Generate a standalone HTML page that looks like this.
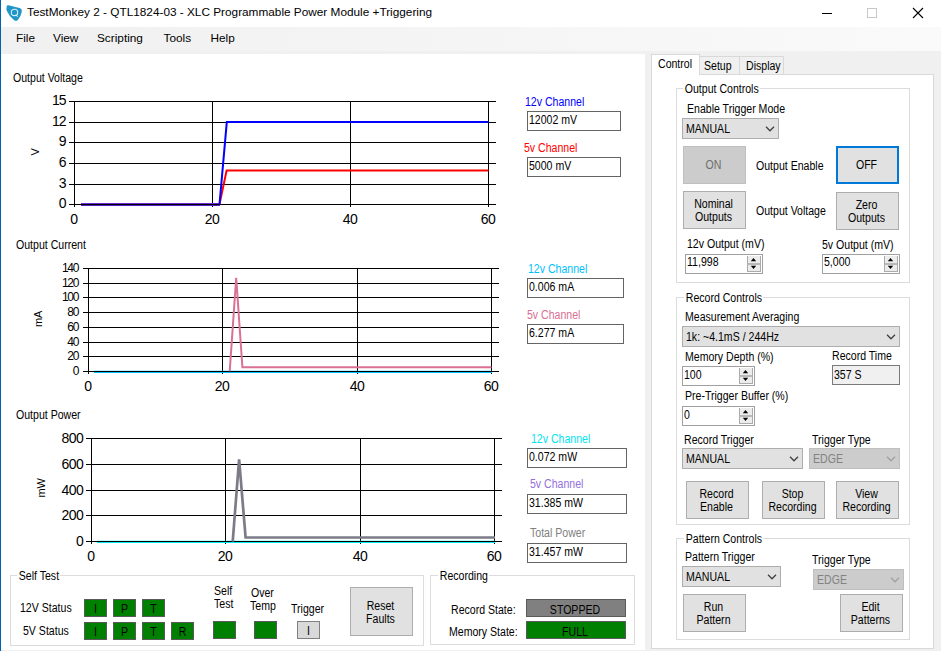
<!DOCTYPE html>
<html><head><meta charset="utf-8"><style>
html,body{margin:0;padding:0;width:941px;height:651px;overflow:hidden;background:#f0f0f0;}
body{position:relative;font-family:"Liberation Sans",sans-serif;}
.t{position:absolute;line-height:1;white-space:nowrap;}
.b{position:absolute;}
svg.ch{position:absolute;left:0;top:0;}
</style></head><body>

<div class="b" style="left:0px;top:0px;width:941px;height:27px;background:#fff;"></div>
<div class="b" style="left:0px;top:0px;width:1px;height:651px;background:#0063b1;"></div>
<svg class="b" style="left:0px;top:0px" width="26" height="26"><path d="M6.8 6.2 Q6.5 5 8.5 5.2 L19.5 8 Q22.2 8.8 21.8 11.8 Q21 16.5 17.8 20 Q16.3 21.6 14.2 20.2 Q9.2 16.5 6.6 10.5 Q6.1 8 6.8 6.2 Z" fill="#1f95c8"/><circle cx="14.5" cy="12.4" r="3.2" fill="none" stroke="#d8eef7" stroke-width="1.1"/><path d="M15.6 14.6 L17.8 16.6" stroke="#d8eef7" stroke-width="1.1"/></svg>
<div class="t" style="left:27px;top:6.51px;font-size:11.8px;letter-spacing:0px;color:#000;">TestMonkey 2 - QTL1824-03 - XLC Programmable Power Module +Triggering</div>
<div class="b" style="left:822px;top:13px;width:10px;height:1px;background:#000;"></div>
<div class="b" style="left:867px;top:8px;width:10px;height:10px;background:none;box-sizing:border-box;border:1px solid #c8c8c8;"></div>
<svg class="b" style="left:912px;top:7px" width="12" height="12"><path d="M1 1 L11 11 M11 1 L1 11" stroke="#000" stroke-width="1.1"/></svg>
<div class="b" style="left:1px;top:27px;width:940px;height:24px;background:linear-gradient(to right,#f0f0f0,#fafafa);"></div>
<div class="t" style="left:16px;top:33.01px;font-size:11.8px;letter-spacing:0px;color:#000;">File</div>
<div class="t" style="left:53px;top:33.01px;font-size:11.8px;letter-spacing:0px;color:#000;">View</div>
<div class="t" style="left:97px;top:33.01px;font-size:11.8px;letter-spacing:0px;color:#000;">Scripting</div>
<div class="t" style="left:163.5px;top:33.01px;font-size:11.8px;letter-spacing:0px;color:#000;">Tools</div>
<div class="t" style="left:210.5px;top:33.01px;font-size:11.8px;letter-spacing:0px;color:#000;">Help</div>
<div class="b" style="left:1px;top:54px;width:644px;height:596px;background:#fff;"></div>
<svg class="ch" width="941" height="651" shape-rendering="crispEdges"><rect x="69" y="101" width="427" height="1" fill="#000"/><rect x="69" y="122" width="427" height="1" fill="#000"/><rect x="69" y="142" width="427" height="1" fill="#000"/><rect x="69" y="163" width="427" height="1" fill="#000"/><rect x="69" y="184" width="427" height="1" fill="#000"/><rect x="69" y="204" width="427" height="1" fill="#000"/><rect x="74" y="101" width="1" height="106" fill="#000"/><rect x="212" y="101" width="1" height="106" fill="#000"/><rect x="350" y="101" width="1" height="106" fill="#000"/><rect x="488" y="101" width="1" height="106" fill="#000"/><rect x="83" y="268" width="416" height="1" fill="#000"/><rect x="83" y="283" width="416" height="1" fill="#000"/><rect x="83" y="297" width="416" height="1" fill="#000"/><rect x="83" y="312" width="416" height="1" fill="#000"/><rect x="83" y="327" width="416" height="1" fill="#000"/><rect x="83" y="342" width="416" height="1" fill="#000"/><rect x="83" y="356" width="416" height="1" fill="#000"/><rect x="83" y="371" width="416" height="1" fill="#000"/><rect x="88" y="268" width="1" height="106" fill="#000"/><rect x="222" y="268" width="1" height="106" fill="#000"/><rect x="357" y="268" width="1" height="106" fill="#000"/><rect x="491" y="268" width="1" height="106" fill="#000"/><rect x="86" y="438" width="416" height="1" fill="#000"/><rect x="86" y="464" width="416" height="1" fill="#000"/><rect x="86" y="490" width="416" height="1" fill="#000"/><rect x="86" y="515" width="416" height="1" fill="#000"/><rect x="86" y="541" width="416" height="1" fill="#000"/><rect x="91" y="438" width="1" height="106" fill="#000"/><rect x="225" y="438" width="1" height="106" fill="#000"/><rect x="360" y="438" width="1" height="106" fill="#000"/><rect x="494" y="438" width="1" height="106" fill="#000"/><rect x="81" y="203" width="139" height="1" fill="#6a2bd0"/><rect x="81" y="205" width="139" height="1" fill="#5020c0"/><rect x="94" y="372" width="398" height="1" fill="#00bfff"/><rect x="94" y="370" width="398" height="1" fill="#00bfff" opacity="0.25"/><rect x="97" y="542" width="398" height="1" fill="#00e8f0"/><rect x="97" y="540" width="398" height="1" fill="#00e8f0" opacity="0.25"/></svg>
<svg class="ch" width="941" height="651"><polyline points="219.5,204.4 226.6,170.6 488.5,170.6" fill="none" stroke="#ff0000" stroke-width="2" stroke-linejoin="miter" opacity="1"/><polyline points="219.5,204.4 226.8,122.1 488.5,122.1" fill="none" stroke="#0000ff" stroke-width="2" stroke-linejoin="miter" opacity="1"/><polyline points="229.7,371.3 236.2,277.7 242.4,367.2 491.5,367.2" fill="none" stroke="#db7093" stroke-width="2" stroke-linejoin="miter" opacity="1"/><polyline points="232.7,541.6 239.1,459.4 245.6,537.5 495,537.5" fill="none" stroke="#7c7c88" stroke-width="2.7" stroke-linejoin="miter" opacity="1"/></svg>
<div class="t" style="left:12.5px;top:72.34px;font-size:12px;letter-spacing:0px;color:#000;transform:scaleX(0.88);transform-origin:0 0;">Output Voltage</div>
<div class="t" style="left:5.5px;top:93.16px;font-size:14px;letter-spacing:-1.0px;color:#000;width:60px;text-align:right;">15</div>
<div class="t" style="left:5.5px;top:114.16px;font-size:14px;letter-spacing:-1.0px;color:#000;width:60px;text-align:right;">12</div>
<div class="t" style="left:5.5px;top:134.16px;font-size:14px;letter-spacing:-1.0px;color:#000;width:60px;text-align:right;">9</div>
<div class="t" style="left:5.5px;top:155.16px;font-size:14px;letter-spacing:-1.0px;color:#000;width:60px;text-align:right;">6</div>
<div class="t" style="left:5.5px;top:176.16px;font-size:14px;letter-spacing:-1.0px;color:#000;width:60px;text-align:right;">3</div>
<div class="t" style="left:5.5px;top:196.16px;font-size:14px;letter-spacing:-1.0px;color:#000;width:60px;text-align:right;">0</div>
<div class="t" style="left:44.0px;top:211.65px;font-size:14px;letter-spacing:-0.5px;color:#000;width:60px;text-align:center;">0</div>
<div class="t" style="left:182.0px;top:211.65px;font-size:14px;letter-spacing:-0.5px;color:#000;width:60px;text-align:center;">20</div>
<div class="t" style="left:320.0px;top:211.65px;font-size:14px;letter-spacing:-0.5px;color:#000;width:60px;text-align:center;">40</div>
<div class="t" style="left:458.0px;top:211.65px;font-size:14px;letter-spacing:-0.5px;color:#000;width:60px;text-align:center;">60</div>
<div class="t" style="left:4.799999999999997px;top:146.3px;width:60px;height:12px;line-height:12px;text-align:center;font-size:11px;letter-spacing:-0.3px;transform:rotate(-90deg)">V</div>
<div class="t" style="left:15.5px;top:238.64px;font-size:12px;letter-spacing:0px;color:#000;transform:scaleX(0.88);transform-origin:0 0;">Output Current</div>
<div class="t" style="left:18.299999999999997px;top:261.64px;font-size:12px;letter-spacing:-1.2px;color:#000;width:60px;text-align:right;">140</div>
<div class="t" style="left:18.299999999999997px;top:276.64px;font-size:12px;letter-spacing:-1.2px;color:#000;width:60px;text-align:right;">120</div>
<div class="t" style="left:18.299999999999997px;top:290.64px;font-size:12px;letter-spacing:-1.2px;color:#000;width:60px;text-align:right;">100</div>
<div class="t" style="left:18.299999999999997px;top:305.64px;font-size:12px;letter-spacing:-1.2px;color:#000;width:60px;text-align:right;">80</div>
<div class="t" style="left:18.299999999999997px;top:320.64px;font-size:12px;letter-spacing:-1.2px;color:#000;width:60px;text-align:right;">60</div>
<div class="t" style="left:18.299999999999997px;top:335.64px;font-size:12px;letter-spacing:-1.2px;color:#000;width:60px;text-align:right;">40</div>
<div class="t" style="left:18.299999999999997px;top:349.64px;font-size:12px;letter-spacing:-1.2px;color:#000;width:60px;text-align:right;">20</div>
<div class="t" style="left:18.299999999999997px;top:364.64px;font-size:12px;letter-spacing:-1.2px;color:#000;width:60px;text-align:right;">0</div>
<div class="t" style="left:58.0px;top:378.65px;font-size:14px;letter-spacing:-0.5px;color:#000;width:60px;text-align:center;">0</div>
<div class="t" style="left:192.0px;top:378.65px;font-size:14px;letter-spacing:-0.5px;color:#000;width:60px;text-align:center;">20</div>
<div class="t" style="left:327.0px;top:378.65px;font-size:14px;letter-spacing:-0.5px;color:#000;width:60px;text-align:center;">40</div>
<div class="t" style="left:461.0px;top:378.65px;font-size:14px;letter-spacing:-0.5px;color:#000;width:60px;text-align:center;">60</div>
<div class="t" style="left:7.799999999999997px;top:312.9px;width:60px;height:12px;line-height:12px;text-align:center;font-size:11px;letter-spacing:-0.3px;transform:rotate(-90deg)">mA</div>
<div class="t" style="left:15.5px;top:408.64px;font-size:12px;letter-spacing:0px;color:#000;transform:scaleX(0.88);transform-origin:0 0;">Output Power</div>
<div class="t" style="left:23.299999999999997px;top:431.16px;font-size:14px;letter-spacing:-0.5px;color:#000;width:60px;text-align:right;">800</div>
<div class="t" style="left:23.299999999999997px;top:457.16px;font-size:14px;letter-spacing:-0.5px;color:#000;width:60px;text-align:right;">600</div>
<div class="t" style="left:23.299999999999997px;top:483.16px;font-size:14px;letter-spacing:-0.5px;color:#000;width:60px;text-align:right;">400</div>
<div class="t" style="left:23.299999999999997px;top:508.16px;font-size:14px;letter-spacing:-0.5px;color:#000;width:60px;text-align:right;">200</div>
<div class="t" style="left:23.299999999999997px;top:534.16px;font-size:14px;letter-spacing:-0.5px;color:#000;width:60px;text-align:right;">0</div>
<div class="t" style="left:61.0px;top:548.65px;font-size:14px;letter-spacing:-0.5px;color:#000;width:60px;text-align:center;">0</div>
<div class="t" style="left:195.0px;top:548.65px;font-size:14px;letter-spacing:-0.5px;color:#000;width:60px;text-align:center;">20</div>
<div class="t" style="left:330.0px;top:548.65px;font-size:14px;letter-spacing:-0.5px;color:#000;width:60px;text-align:center;">40</div>
<div class="t" style="left:464.0px;top:548.65px;font-size:14px;letter-spacing:-0.5px;color:#000;width:60px;text-align:center;">60</div>
<div class="t" style="left:10.700000000000003px;top:482.2px;width:60px;height:12px;line-height:12px;text-align:center;font-size:11px;letter-spacing:-0.3px;transform:rotate(-90deg)">mW</div>
<div class="t" style="left:525px;top:95.74px;font-size:12px;letter-spacing:0px;color:#0000ff;transform:scaleX(0.88);transform-origin:0 0;">12v Channel</div>
<div class="b" style="left:527px;top:111px;width:94px;height:20px;background:#fff;box-sizing:border-box;border:1px solid #646464;"></div>
<div class="t" style="left:529px;top:113.74px;font-size:12px;letter-spacing:0px;color:#000;transform:scaleX(0.88);transform-origin:0 0;">12002 mV</div>
<div class="t" style="left:524px;top:141.84px;font-size:12px;letter-spacing:0px;color:#ff0000;transform:scaleX(0.88);transform-origin:0 0;">5v Channel</div>
<div class="b" style="left:527px;top:157px;width:94px;height:20px;background:#fff;box-sizing:border-box;border:1px solid #646464;"></div>
<div class="t" style="left:529px;top:159.74px;font-size:12px;letter-spacing:0px;color:#000;transform:scaleX(0.88);transform-origin:0 0;">5000 mV</div>
<div class="t" style="left:528px;top:262.74px;font-size:12px;letter-spacing:0px;color:#00bfff;transform:scaleX(0.88);transform-origin:0 0;">12v Channel</div>
<div class="b" style="left:527px;top:278px;width:97px;height:20px;background:#fff;box-sizing:border-box;border:1px solid #646464;"></div>
<div class="t" style="left:529px;top:280.74px;font-size:12px;letter-spacing:0px;color:#000;transform:scaleX(0.88);transform-origin:0 0;">0.006 mA</div>
<div class="t" style="left:527px;top:308.84px;font-size:12px;letter-spacing:0px;color:#db7093;transform:scaleX(0.88);transform-origin:0 0;">5v Channel</div>
<div class="b" style="left:527px;top:324px;width:97px;height:20px;background:#fff;box-sizing:border-box;border:1px solid #646464;"></div>
<div class="t" style="left:529px;top:326.74px;font-size:12px;letter-spacing:0px;color:#000;transform:scaleX(0.88);transform-origin:0 0;">6.277 mA</div>
<div class="t" style="left:530.8px;top:432.84px;font-size:12px;letter-spacing:0px;color:#00e5ee;transform:scaleX(0.88);transform-origin:0 0;">12v Channel</div>
<div class="b" style="left:527px;top:448px;width:100px;height:20px;background:#fff;box-sizing:border-box;border:1px solid #646464;"></div>
<div class="t" style="left:529px;top:450.74px;font-size:12px;letter-spacing:0px;color:#000;transform:scaleX(0.88);transform-origin:0 0;">0.072 mW</div>
<div class="t" style="left:530px;top:478.44px;font-size:12px;letter-spacing:0px;color:#9370db;transform:scaleX(0.88);transform-origin:0 0;">5v Channel</div>
<div class="b" style="left:527px;top:494px;width:100px;height:20px;background:#fff;box-sizing:border-box;border:1px solid #646464;"></div>
<div class="t" style="left:529px;top:496.74px;font-size:12px;letter-spacing:0px;color:#000;transform:scaleX(0.88);transform-origin:0 0;">31.385 mW</div>
<div class="t" style="left:530px;top:527.34px;font-size:12px;letter-spacing:0px;color:#808080;transform:scaleX(0.88);transform-origin:0 0;">Total Power</div>
<div class="b" style="left:527px;top:543px;width:100px;height:20px;background:#fff;box-sizing:border-box;border:1px solid #646464;"></div>
<div class="t" style="left:529px;top:545.74px;font-size:12px;letter-spacing:0px;color:#000;transform:scaleX(0.88);transform-origin:0 0;">31.457 mW</div>
<div class="b" style="left:10px;top:575px;width:414px;height:71px;background:none;box-sizing:border-box;border:1px solid #dcdcdc;"></div>
<div class="t" style="left:17.4px;top:569.94px;font-size:12px;letter-spacing:0px;color:#000;transform:scaleX(0.88);transform-origin:0 0;background:#fff;padding:0 1px 0 2px;">Self Test</div>
<div class="t" style="left:19.9px;top:601.84px;font-size:12px;letter-spacing:0px;color:#000;transform:scaleX(0.88);transform-origin:0 0;">12V Status</div>
<div class="t" style="left:23.3px;top:624.64px;font-size:12px;letter-spacing:0px;color:#000;transform:scaleX(0.88);transform-origin:0 0;">5V Status</div>
<div class="b" style="left:84px;top:599px;width:23px;height:18px;background:#008000;box-sizing:border-box;border:1px solid #5a5a5a;"></div>
<div class="t" style="left:84px;top:603.04px;font-size:12px;letter-spacing:0px;color:#000;width:23px;text-align:center;transform:scaleX(0.88);transform-origin:50% 0;">I</div>
<div class="b" style="left:113px;top:599px;width:23px;height:18px;background:#008000;box-sizing:border-box;border:1px solid #5a5a5a;"></div>
<div class="t" style="left:113px;top:603.04px;font-size:12px;letter-spacing:0px;color:#000;width:23px;text-align:center;transform:scaleX(0.88);transform-origin:50% 0;">P</div>
<div class="b" style="left:142px;top:599px;width:23px;height:18px;background:#008000;box-sizing:border-box;border:1px solid #5a5a5a;"></div>
<div class="t" style="left:142px;top:603.04px;font-size:12px;letter-spacing:0px;color:#000;width:23px;text-align:center;transform:scaleX(0.88);transform-origin:50% 0;">T</div>
<div class="b" style="left:84px;top:622px;width:23px;height:18px;background:#008000;box-sizing:border-box;border:1px solid #5a5a5a;"></div>
<div class="t" style="left:84px;top:626.04px;font-size:12px;letter-spacing:0px;color:#000;width:23px;text-align:center;transform:scaleX(0.88);transform-origin:50% 0;">I</div>
<div class="b" style="left:113px;top:622px;width:23px;height:18px;background:#008000;box-sizing:border-box;border:1px solid #5a5a5a;"></div>
<div class="t" style="left:113px;top:626.04px;font-size:12px;letter-spacing:0px;color:#000;width:23px;text-align:center;transform:scaleX(0.88);transform-origin:50% 0;">P</div>
<div class="b" style="left:142px;top:622px;width:23px;height:18px;background:#008000;box-sizing:border-box;border:1px solid #5a5a5a;"></div>
<div class="t" style="left:142px;top:626.04px;font-size:12px;letter-spacing:0px;color:#000;width:23px;text-align:center;transform:scaleX(0.88);transform-origin:50% 0;">T</div>
<div class="b" style="left:171px;top:622px;width:23px;height:18px;background:#008000;box-sizing:border-box;border:1px solid #5a5a5a;"></div>
<div class="t" style="left:171px;top:626.04px;font-size:12px;letter-spacing:0px;color:#000;width:23px;text-align:center;transform:scaleX(0.88);transform-origin:50% 0;">R</div>
<div class="t" style="left:214.2px;top:584.84px;font-size:12px;letter-spacing:0px;color:#000;transform:scaleX(0.88);transform-origin:0 0;">Self</div>
<div class="t" style="left:213.5px;top:597.84px;font-size:12px;letter-spacing:0px;color:#000;transform:scaleX(0.88);transform-origin:0 0;">Test</div>
<div class="t" style="left:250.8px;top:586.94px;font-size:12px;letter-spacing:0px;color:#000;transform:scaleX(0.88);transform-origin:0 0;">Over</div>
<div class="t" style="left:250.3px;top:599.94px;font-size:12px;letter-spacing:0px;color:#000;transform:scaleX(0.88);transform-origin:0 0;">Temp</div>
<div class="t" style="left:291px;top:603.44px;font-size:12px;letter-spacing:0px;color:#000;transform:scaleX(0.88);transform-origin:0 0;">Trigger</div>
<div class="b" style="left:213px;top:621px;width:23px;height:18px;background:#008000;box-sizing:border-box;border:1px solid #5a5a5a;"></div>
<div class="b" style="left:254px;top:621px;width:23px;height:18px;background:#008000;box-sizing:border-box;border:1px solid #5a5a5a;"></div>
<div class="b" style="left:297px;top:621px;width:23px;height:18px;background:#d9d9d9;box-sizing:border-box;border:1px solid #808080;"></div>
<div class="t" style="left:297px;top:625.04px;font-size:12px;letter-spacing:0px;color:#000;width:23px;text-align:center;transform:scaleX(0.88);transform-origin:50% 0;">I</div>
<div class="b" style="left:350px;top:587px;width:63px;height:49px;background:#e1e1e1;box-sizing:border-box;border:1px solid #adadad;"></div>
<div class="t" style="left:349px;top:599.64px;font-size:12px;letter-spacing:0px;color:#000;width:63px;text-align:center;transform:scaleX(0.88);transform-origin:50% 0;">Reset</div>
<div class="t" style="left:349px;top:612.64px;font-size:12px;letter-spacing:0px;color:#000;width:63px;text-align:center;transform:scaleX(0.88);transform-origin:50% 0;">Faults</div>
<div class="b" style="left:430px;top:575px;width:205px;height:70px;background:none;box-sizing:border-box;border:1px solid #dcdcdc;"></div>
<div class="t" style="left:437.6px;top:569.84px;font-size:12px;letter-spacing:0px;color:#000;transform:scaleX(0.88);transform-origin:0 0;background:#fff;padding:0 1px 0 2px;">Recording</div>
<div class="t" style="left:451.3px;top:604.04px;font-size:12px;letter-spacing:0px;color:#000;transform:scaleX(0.88);transform-origin:0 0;">Record State:</div>
<div class="t" style="left:449.3px;top:625.64px;font-size:12px;letter-spacing:0px;color:#000;transform:scaleX(0.88);transform-origin:0 0;">Memory State:</div>
<div class="b" style="left:526px;top:599px;width:100px;height:18px;background:#808080;box-sizing:border-box;border:1px solid #5a5a5a;"></div>
<div class="t" style="left:525px;top:604.04px;font-size:12px;letter-spacing:0px;color:#000;width:100px;text-align:center;transform:scaleX(0.88);transform-origin:50% 0;">STOPPED</div>
<div class="b" style="left:526px;top:621px;width:100px;height:18px;background:#008000;box-sizing:border-box;border:1px solid #5a5a5a;"></div>
<div class="t" style="left:525px;top:626.04px;font-size:12px;letter-spacing:0px;color:#000;width:100px;text-align:center;transform:scaleX(0.88);transform-origin:50% 0;">FULL</div>
<div class="b" style="left:699px;top:56px;width:41px;height:19px;background:#f0f0f0;box-sizing:border-box;border:1px solid #d9d9d9;"></div>
<div class="b" style="left:739px;top:56px;width:45px;height:19px;background:#f0f0f0;box-sizing:border-box;border:1px solid #d9d9d9;"></div>
<div class="t" style="left:704px;top:60.14px;font-size:12px;letter-spacing:0px;color:#000;transform:scaleX(0.88);transform-origin:0 0;">Setup</div>
<div class="t" style="left:746.2px;top:60.14px;font-size:12px;letter-spacing:0px;color:#000;transform:scaleX(0.88);transform-origin:0 0;">Display</div>
<div class="b" style="left:651px;top:74px;width:283px;height:575px;background:#fff;box-sizing:border-box;border:1px solid #d9d9d9;"></div>
<div class="b" style="left:651px;top:54px;width:49px;height:21px;background:#fff;box-sizing:border-box;border:1px solid #d9d9d9;border-bottom:none"></div>
<div class="t" style="left:658px;top:57.84px;font-size:12px;letter-spacing:0px;color:#000;transform:scaleX(0.88);transform-origin:0 0;">Control</div>
<div class="b" style="left:676px;top:88px;width:234px;height:195px;background:none;box-sizing:border-box;border:1px solid #dcdcdc;"></div>
<div class="t" style="left:683px;top:82.84px;font-size:12px;letter-spacing:0px;color:#000;transform:scaleX(0.88);transform-origin:0 0;background:#fff;padding:0 1px 0 2px;">Output Controls</div>
<div class="t" style="left:686.7px;top:103.24px;font-size:12px;letter-spacing:0px;color:#000;transform:scaleX(0.88);transform-origin:0 0;">Enable Trigger Mode</div>
<div class="b" style="left:682px;top:118px;width:97px;height:21px;background:#e1e1e1;box-sizing:border-box;border:1px solid #adadad;"></div>
<div class="t" style="left:686px;top:122.84px;font-size:12px;letter-spacing:0px;color:#000;transform:scaleX(0.88);transform-origin:0 0;">MANUAL</div>
<svg class="b" style="left:765px;top:125.0px" width="10" height="8"><path d="M1 1.8 L5 5.8 L9 1.8" fill="none" stroke="#404040" stroke-width="1.25"/></svg>
<div class="b" style="left:683px;top:146px;width:63px;height:38px;background:#cccccc;box-sizing:border-box;border:1px solid #bfbfbf;"></div>
<div class="t" style="left:682px;top:159.34px;font-size:12px;letter-spacing:0px;color:#6d6d6d;width:63px;text-align:center;transform:scaleX(0.88);transform-origin:50% 0;">ON</div>
<div class="t" style="left:755.6px;top:159.84px;font-size:12px;letter-spacing:0px;color:#000;transform:scaleX(0.88);transform-origin:0 0;">Output Enable</div>
<div class="b" style="left:836px;top:146px;width:63px;height:38px;background:#e1e1e1;box-sizing:border-box;border:2px solid #0078d7;"></div>
<div class="t" style="left:835px;top:159.34px;font-size:12px;letter-spacing:0px;color:#000;width:63px;text-align:center;transform:scaleX(0.88);transform-origin:50% 0;">OFF</div>
<div class="b" style="left:683px;top:191px;width:63px;height:38px;background:#e1e1e1;box-sizing:border-box;border:1px solid #adadad;"></div>
<div class="t" style="left:682px;top:198.34px;font-size:12px;letter-spacing:0px;color:#000;width:63px;text-align:center;transform:scaleX(0.88);transform-origin:50% 0;">Nominal</div>
<div class="t" style="left:682px;top:211.34px;font-size:12px;letter-spacing:0px;color:#000;width:63px;text-align:center;transform:scaleX(0.88);transform-origin:50% 0;">Outputs</div>
<div class="t" style="left:755.6px;top:204.84px;font-size:12px;letter-spacing:0px;color:#000;transform:scaleX(0.88);transform-origin:0 0;">Output Voltage</div>
<div class="b" style="left:836px;top:192px;width:63px;height:38px;background:#e1e1e1;box-sizing:border-box;border:1px solid #adadad;"></div>
<div class="t" style="left:835px;top:199.34px;font-size:12px;letter-spacing:0px;color:#000;width:63px;text-align:center;transform:scaleX(0.88);transform-origin:50% 0;">Zero</div>
<div class="t" style="left:835px;top:212.34px;font-size:12px;letter-spacing:0px;color:#000;width:63px;text-align:center;transform:scaleX(0.88);transform-origin:50% 0;">Outputs</div>
<div class="t" style="left:687.2px;top:238.44px;font-size:12px;letter-spacing:0px;color:#000;transform:scaleX(0.88);transform-origin:0 0;">12v Output (mV)</div>
<div class="b" style="left:685px;top:254px;width:78px;height:20px;background:#fff;box-sizing:border-box;border:1px solid #a0a0a0;"></div>
<div class="t" style="left:687.2px;top:256.34px;font-size:12px;letter-spacing:0px;color:#000;transform:scaleX(0.88);transform-origin:0 0;">11,998</div>
<svg class="b" style="left:747px;top:254px" width="15" height="20" shape-rendering="crispEdges"><rect x="0" y="2" width="14" height="16" fill="#ececec"/><rect x="0" y="2" width="1" height="16" fill="#ababab"/><rect x="13" y="2" width="1" height="16" fill="#ababab"/><rect x="0" y="17" width="14" height="1" fill="#ababab"/><rect x="1" y="9" width="12" height="2" fill="#b9b9b9"/></svg>
<svg class="b" style="left:747px;top:254px" width="15" height="20"><path d="M3.8 7.2 L6.5 3.9 L9.2 7.2 Z" fill="#000"/><path d="M3.8 11.8 L6.5 15.1 L9.2 11.8 Z" fill="#000"/></svg>
<div class="t" style="left:822.3px;top:238.84px;font-size:12px;letter-spacing:0px;color:#000;transform:scaleX(0.88);transform-origin:0 0;">5v Output (mV)</div>
<div class="b" style="left:822px;top:254px;width:78px;height:20px;background:#fff;box-sizing:border-box;border:1px solid #a0a0a0;"></div>
<div class="t" style="left:824.2px;top:256.34px;font-size:12px;letter-spacing:0px;color:#000;transform:scaleX(0.88);transform-origin:0 0;">5,000</div>
<svg class="b" style="left:884px;top:254px" width="15" height="20" shape-rendering="crispEdges"><rect x="0" y="2" width="14" height="16" fill="#ececec"/><rect x="0" y="2" width="1" height="16" fill="#ababab"/><rect x="13" y="2" width="1" height="16" fill="#ababab"/><rect x="0" y="17" width="14" height="1" fill="#ababab"/><rect x="1" y="9" width="12" height="2" fill="#b9b9b9"/></svg>
<svg class="b" style="left:884px;top:254px" width="15" height="20"><path d="M3.8 7.2 L6.5 3.9 L9.2 7.2 Z" fill="#000"/><path d="M3.8 11.8 L6.5 15.1 L9.2 11.8 Z" fill="#000"/></svg>
<div class="b" style="left:676px;top:297px;width:234px;height:228px;background:none;box-sizing:border-box;border:1px solid #dcdcdc;"></div>
<div class="t" style="left:683.6px;top:291.94px;font-size:12px;letter-spacing:0px;color:#000;transform:scaleX(0.88);transform-origin:0 0;background:#fff;padding:0 1px 0 2px;">Record Controls</div>
<div class="t" style="left:685.1px;top:311.14px;font-size:12px;letter-spacing:0px;color:#000;transform:scaleX(0.88);transform-origin:0 0;">Measurement Averaging</div>
<div class="b" style="left:682px;top:326px;width:218px;height:21px;background:#e1e1e1;box-sizing:border-box;border:1px solid #adadad;"></div>
<div class="t" style="left:686px;top:331.14px;font-size:12px;letter-spacing:0px;color:#000;transform:scaleX(0.88);transform-origin:0 0;">1k: ~4.1mS / 244Hz</div>
<svg class="b" style="left:886px;top:333.0px" width="10" height="8"><path d="M1 1.8 L5 5.8 L9 1.8" fill="none" stroke="#404040" stroke-width="1.25"/></svg>
<div class="t" style="left:685.1px;top:350.54px;font-size:12px;letter-spacing:0px;color:#000;transform:scaleX(0.88);transform-origin:0 0;">Memory Depth (%)</div>
<div class="b" style="left:682px;top:366px;width:73px;height:20px;background:#fff;box-sizing:border-box;border:1px solid #a0a0a0;"></div>
<div class="t" style="left:684.2px;top:368.84px;font-size:12px;letter-spacing:0px;color:#000;transform:scaleX(0.88);transform-origin:0 0;">100</div>
<svg class="b" style="left:739px;top:366px" width="15" height="20" shape-rendering="crispEdges"><rect x="0" y="2" width="14" height="16" fill="#ececec"/><rect x="0" y="2" width="1" height="16" fill="#ababab"/><rect x="13" y="2" width="1" height="16" fill="#ababab"/><rect x="0" y="17" width="14" height="1" fill="#ababab"/><rect x="1" y="9" width="12" height="2" fill="#b9b9b9"/></svg>
<svg class="b" style="left:739px;top:366px" width="15" height="20"><path d="M3.8 7.2 L6.5 3.9 L9.2 7.2 Z" fill="#000"/><path d="M3.8 11.8 L6.5 15.1 L9.2 11.8 Z" fill="#000"/></svg>
<div class="t" style="left:832.3px;top:350.04px;font-size:12px;letter-spacing:0px;color:#000;transform:scaleX(0.88);transform-origin:0 0;">Record Time</div>
<div class="b" style="left:832px;top:365px;width:68px;height:20px;background:#f0f0f0;box-sizing:border-box;border:1px solid #7a7a7a;"></div>
<div class="t" style="left:834px;top:368.84px;font-size:12px;letter-spacing:0px;color:#000;transform:scaleX(0.88);transform-origin:0 0;">357 S</div>
<div class="t" style="left:685.1px;top:390.14px;font-size:12px;letter-spacing:0px;color:#000;transform:scaleX(0.88);transform-origin:0 0;">Pre-Trigger Buffer (%)</div>
<div class="b" style="left:682px;top:406px;width:73px;height:20px;background:#fff;box-sizing:border-box;border:1px solid #a0a0a0;"></div>
<div class="t" style="left:684.2px;top:408.84px;font-size:12px;letter-spacing:0px;color:#000;transform:scaleX(0.88);transform-origin:0 0;">0</div>
<svg class="b" style="left:739px;top:406px" width="15" height="20" shape-rendering="crispEdges"><rect x="0" y="2" width="14" height="16" fill="#ececec"/><rect x="0" y="2" width="1" height="16" fill="#ababab"/><rect x="13" y="2" width="1" height="16" fill="#ababab"/><rect x="0" y="17" width="14" height="1" fill="#ababab"/><rect x="1" y="9" width="12" height="2" fill="#b9b9b9"/></svg>
<svg class="b" style="left:739px;top:406px" width="15" height="20"><path d="M3.8 7.2 L6.5 3.9 L9.2 7.2 Z" fill="#000"/><path d="M3.8 11.8 L6.5 15.1 L9.2 11.8 Z" fill="#000"/></svg>
<div class="t" style="left:683.8px;top:434.24px;font-size:12px;letter-spacing:0px;color:#000;transform:scaleX(0.88);transform-origin:0 0;">Record Trigger</div>
<div class="b" style="left:682px;top:448px;width:121px;height:21px;background:#e1e1e1;box-sizing:border-box;border:1px solid #adadad;"></div>
<div class="t" style="left:686px;top:452.74px;font-size:12px;letter-spacing:0px;color:#000;transform:scaleX(0.88);transform-origin:0 0;">MANUAL</div>
<svg class="b" style="left:789px;top:455.0px" width="10" height="8"><path d="M1 1.8 L5 5.8 L9 1.8" fill="none" stroke="#404040" stroke-width="1.25"/></svg>
<div class="t" style="left:811.5px;top:433.84px;font-size:12px;letter-spacing:0px;color:#000;transform:scaleX(0.88);transform-origin:0 0;">Trigger Type</div>
<div class="b" style="left:809px;top:448px;width:91px;height:21px;background:#cccccc;box-sizing:border-box;border:1px solid #bfbfbf;"></div>
<div class="t" style="left:813px;top:452.74px;font-size:12px;letter-spacing:0px;color:#838383;transform:scaleX(0.88);transform-origin:0 0;">EDGE</div>
<svg class="b" style="left:886px;top:455.0px" width="10" height="8"><path d="M1 1.8 L5 5.8 L9 1.8" fill="none" stroke="#a0a0a0" stroke-width="1.25"/></svg>
<div class="b" style="left:686px;top:481px;width:63px;height:38px;background:#e1e1e1;box-sizing:border-box;border:1px solid #adadad;"></div>
<div class="t" style="left:685px;top:487.94px;font-size:12px;letter-spacing:0px;color:#000;width:63px;text-align:center;transform:scaleX(0.88);transform-origin:50% 0;">Record</div>
<div class="t" style="left:685px;top:500.84px;font-size:12px;letter-spacing:0px;color:#000;width:63px;text-align:center;transform:scaleX(0.88);transform-origin:50% 0;">Enable</div>
<div class="b" style="left:762px;top:481px;width:63px;height:38px;background:#e1e1e1;box-sizing:border-box;border:1px solid #adadad;"></div>
<div class="t" style="left:761px;top:487.94px;font-size:12px;letter-spacing:0px;color:#000;width:63px;text-align:center;transform:scaleX(0.88);transform-origin:50% 0;">Stop</div>
<div class="t" style="left:761px;top:500.84px;font-size:12px;letter-spacing:0px;color:#000;width:63px;text-align:center;transform:scaleX(0.88);transform-origin:50% 0;">Recording</div>
<div class="b" style="left:836px;top:481px;width:63px;height:38px;background:#e1e1e1;box-sizing:border-box;border:1px solid #adadad;"></div>
<div class="t" style="left:835px;top:487.94px;font-size:12px;letter-spacing:0px;color:#000;width:63px;text-align:center;transform:scaleX(0.88);transform-origin:50% 0;">View</div>
<div class="t" style="left:835px;top:500.84px;font-size:12px;letter-spacing:0px;color:#000;width:63px;text-align:center;transform:scaleX(0.88);transform-origin:50% 0;">Recording</div>
<div class="b" style="left:676px;top:538px;width:234px;height:102px;background:none;box-sizing:border-box;border:1px solid #dcdcdc;"></div>
<div class="t" style="left:683.5px;top:532.54px;font-size:12px;letter-spacing:0px;color:#000;transform:scaleX(0.88);transform-origin:0 0;background:#fff;padding:0 1px 0 2px;">Pattern Controls</div>
<div class="t" style="left:684.8px;top:551.34px;font-size:12px;letter-spacing:0px;color:#000;transform:scaleX(0.88);transform-origin:0 0;">Pattern Trigger</div>
<div class="b" style="left:682px;top:566px;width:99px;height:21px;background:#e1e1e1;box-sizing:border-box;border:1px solid #adadad;"></div>
<div class="t" style="left:686px;top:570.84px;font-size:12px;letter-spacing:0px;color:#000;transform:scaleX(0.88);transform-origin:0 0;">MANUAL</div>
<svg class="b" style="left:767px;top:573.0px" width="10" height="8"><path d="M1 1.8 L5 5.8 L9 1.8" fill="none" stroke="#404040" stroke-width="1.25"/></svg>
<div class="t" style="left:811.8px;top:553.54px;font-size:12px;letter-spacing:0px;color:#000;transform:scaleX(0.88);transform-origin:0 0;">Trigger Type</div>
<div class="b" style="left:813px;top:569px;width:91px;height:21px;background:#cccccc;box-sizing:border-box;border:1px solid #bfbfbf;"></div>
<div class="t" style="left:817px;top:573.84px;font-size:12px;letter-spacing:0px;color:#838383;transform:scaleX(0.88);transform-origin:0 0;">EDGE</div>
<svg class="b" style="left:890px;top:576.0px" width="10" height="8"><path d="M1 1.8 L5 5.8 L9 1.8" fill="none" stroke="#a0a0a0" stroke-width="1.25"/></svg>
<div class="b" style="left:683px;top:594px;width:63px;height:38px;background:#e1e1e1;box-sizing:border-box;border:1px solid #adadad;"></div>
<div class="t" style="left:682px;top:601.34px;font-size:12px;letter-spacing:0px;color:#000;width:63px;text-align:center;transform:scaleX(0.88);transform-origin:50% 0;">Run</div>
<div class="t" style="left:682px;top:614.34px;font-size:12px;letter-spacing:0px;color:#000;width:63px;text-align:center;transform:scaleX(0.88);transform-origin:50% 0;">Pattern</div>
<div class="b" style="left:840px;top:594px;width:63px;height:38px;background:#e1e1e1;box-sizing:border-box;border:1px solid #adadad;"></div>
<div class="t" style="left:839px;top:601.34px;font-size:12px;letter-spacing:0px;color:#000;width:63px;text-align:center;transform:scaleX(0.88);transform-origin:50% 0;">Edit</div>
<div class="t" style="left:839px;top:614.34px;font-size:12px;letter-spacing:0px;color:#000;width:63px;text-align:center;transform:scaleX(0.88);transform-origin:50% 0;">Patterns</div>
</body></html>
